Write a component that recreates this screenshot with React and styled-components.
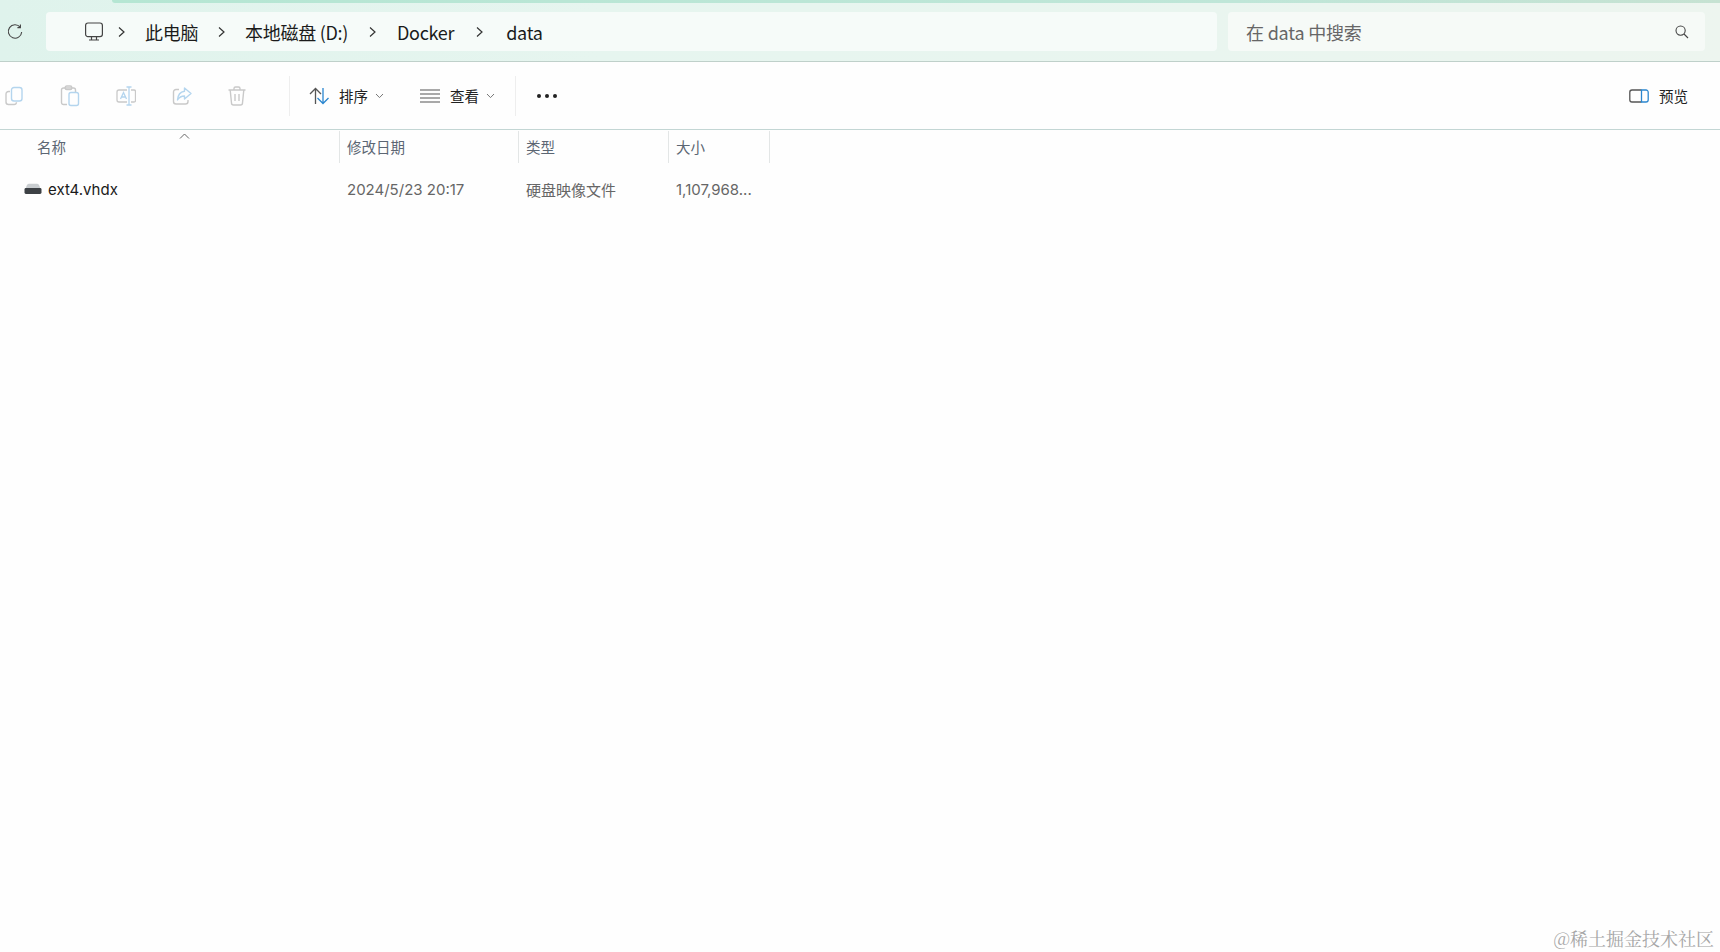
import React from "react";
import styled, { createGlobalStyle } from "styled-components";

const GlobalStyle = createGlobalStyle`
  html, body { margin: 0; padding: 0; background: #fff; }
  body { font-family: "Noto Sans CJK SC", "Inter", "Open Sans", sans-serif; }
`;

const Page = styled.div`
  position: relative;
  width: 1720px;
  height: 952px;
  overflow: hidden;
  background: #fefefe;
`;

const NavBar = styled.div`
  position: relative;
  height: 62px;
  box-sizing: border-box;
  padding: 12px 15px 10px 0;
  display: flex;
  align-items: stretch;
  background: linear-gradient(90deg, #dff3ec 0%, #e6f5ef 35%, #e9f5ef 70%, #edf5ef 100%);
  border-bottom: 1px solid #bfd0ca;
`;

const Accent = styled.div`
  position: absolute;
  top: 0;
  left: 112px;
  right: 0;
  height: 3px;
  border-radius: 0 0 0 3px;
  background: linear-gradient(90deg, #b5e6d3, #bfe6d8 70%, #c6e2d2);
`;

const RefreshSlot = styled.div`
  width: 46px;
  padding-right: 16px;
  box-sizing: border-box;
  display: flex;
  align-items: center;
  justify-content: center;
  padding-top: 1px;
`;

const Crumbs = styled.div`
  width: 1171px;
  display: flex;
  align-items: center;
  background: #f6fbf9;
  border-radius: 4px;
`;

const PcSlot = styled.div`
  width: 66px;
  display: flex;
  justify-content: flex-end;
  padding-right: 4px;
  box-sizing: border-box;
  margin-left: -4px;
`;

const Crumb = styled.span`
  font-size: 18px;
  line-height: 24px;
  color: #1b1b1b;
  letter-spacing: -0.3px;
  white-space: nowrap;
`;

const Chevron = styled.svg`
  width: ${(p) => p.$w}px;
  height: 12px;
  flex: none;
`;

const SearchBox = styled.div`
  width: 477px;
  margin-left: 11px;
  box-sizing: border-box;
  padding: 0 16px 0 18px;
  display: flex;
  align-items: center;
  justify-content: space-between;
  background: #f6faf7;
  border-radius: 4px;
`;

const SearchText = styled.span`
  font-size: 18px;
  line-height: 24px;
  color: #666;
  letter-spacing: -0.2px;
`;

const Toolbar = styled.div`
  height: 68px;
  box-sizing: border-box;
  display: flex;
  align-items: center;
  border-bottom: 1px solid #c3d6d4;
  padding-top: 1px;
`;

const GhostIcons = styled.div`
  display: flex;
  align-items: center;
  gap: 36px;
  padding-left: 4px;
  width: 289px;
  box-sizing: border-box;
`;

const Divider = styled.div`
  width: 1px;
  height: 40px;
  background: #eeeeee;
`;

const ToolLabel = styled.span`
  font-size: 14.5px;
  line-height: 20px;
  color: #222;
  margin-left: ${(p) => p.$ml || 0}px;
`;

const ToolGroup = styled.div`
  display: flex;
  align-items: center;
  margin-left: ${(p) => p.$ml || 0}px;
`;

const Small = styled.svg`
  width: 9px;
  height: 6px;
  margin-left: ${(p) => p.$ml || 7}px;
`;

const Dots = styled.div`
  display: flex;
  gap: 4px;
  margin-left: 21px;
`;

const Dot = styled.i`
  width: 4px;
  height: 4px;
  border-radius: 50%;
  background: #222;
`;

const PushRight = styled.div`
  margin-left: auto;
  margin-right: 32px;
  display: flex;
  align-items: center;
`;

const HeaderRow = styled.div`
  position: relative;
  display: grid;
  grid-template-columns: 340px 179px 150px 101px;
  height: 32px;
  margin-top: 1px;
`;

const HeadCell = styled.div`
  box-sizing: border-box;
  border-right: 1px solid #e3e6e6;
  font-size: 14.5px;
  line-height: 32px;
  color: #5c6673;
  padding-left: ${(p) => p.$pl}px;
  white-space: nowrap;
`;

const SortArrow = styled.svg`
  position: absolute;
  left: 179px;
  top: 2px;
  width: 11px;
  height: 6px;
`;

const FileRow = styled.div`
  display: grid;
  grid-template-columns: 340px 179px 150px 101px;
  height: 26px;
  margin-top: 13px;
  align-items: center;
`;

const NameCell = styled.div`
  display: flex;
  align-items: center;
  padding-left: 24px;
  font-family: "Inter", "Open Sans", sans-serif;
  font-size: 15px;
  color: #1a1a1a;
  gap: 6px;
`;

const DataCell = styled.div`
  font-family: "Inter", "Noto Sans CJK SC", sans-serif;
  font-size: 15px;
  color: #666;
  padding-left: 7px;
  white-space: nowrap;
`;

const Watermark = styled.div`
  position: absolute;
  right: 6px;
  bottom: 2px;
  font-family: "Noto Serif CJK SC", "Liberation Serif", "Noto Sans CJK SC", serif;
  font-size: 18px;
  line-height: 24px;
  color: #a6a6a6;
  white-space: nowrap;
`;

const ArrowRight = ({ w, ...rest }) => (
  <Chevron $w={w} viewBox={`0 0 ${w} 12`} {...rest}>
    <path
      d={`M${w / 2 - 3} 1.5 L${w / 2 + 2} 6 L${w / 2 - 3} 10.5`}
      fill="none"
      stroke="#333"
      strokeWidth="1.2"
    />
  </Chevron>
);

const Down = ({ ml }) => (
  <Small $ml={ml} viewBox="0 0 9 6">
    <path d="M1 1 L4.5 4.6 L8 1" fill="none" stroke="#777" strokeWidth="1" />
  </Small>
);

const grey = "#c9c9c9";
const blue = "#b4d5ee";

function CopyIcon() {
  return (
    <svg width="20" height="20" viewBox="0 0 20 20" fill="none" strokeWidth="1.4">
      <path d="M6 5.5H4.5A2.5 2.5 0 0 0 2 8v8a2.5 2.5 0 0 0 2.5 2.5H10a2.5 2.5 0 0 0 2.5-2.3" stroke={grey} />
      <rect x="7.5" y="1.5" width="10.5" height="13.5" rx="2.5" stroke={blue} />
    </svg>
  );
}

function PasteIcon() {
  return (
    <svg width="20" height="22" viewBox="0 0 20 22" fill="none" strokeWidth="1.4">
      <path d="M7 19.5H3.5A2 2 0 0 1 1.5 17.5V5a2 2 0 0 1 2-2h10a2 2 0 0 1 2 2v2" stroke={grey} />
      <rect x="5.2" y="1" width="6.6" height="3.6" rx="1.5" stroke={grey} />
      <rect x="9" y="7.5" width="9.5" height="13" rx="2" stroke={blue} />
    </svg>
  );
}

function RenameIcon() {
  return (
    <svg width="20" height="20" viewBox="0 0 20 20" fill="none" strokeWidth="1.3">
      <path d="M11 4H3a2 2 0 0 0-2 2v8a2 2 0 0 0 2 2h8" stroke={grey} />
      <path d="M15 4h3a1.5 1.5 0 0 1 1.5 1.5v9A1.5 1.5 0 0 1 18 16h-3" stroke={grey} />
      <path d="M10.5 1h5M13 1v18M10.5 19h5" stroke={blue} />
      <path d="M4.5 13 L7.5 6.5 L10.5 13 M5.6 11h3.8" stroke={blue} />
    </svg>
  );
}

function ShareIcon() {
  return (
    <svg width="20" height="20" viewBox="0 0 20 20" fill="none" strokeWidth="1.4">
      <path d="M7 3.5H4A2.5 2.5 0 0 0 1.5 6v9.5A2.5 2.5 0 0 0 4 18h9.5a2.5 2.5 0 0 0 2.5-2.5V14" stroke={grey} />
      <path d="M12.5 2 L19 7.5 L12.5 13 V10 C9 10 7 11.5 5.5 14 C5.8 9.5 8 5.8 12.5 5.2 Z" stroke={blue} strokeLinejoin="round" />
    </svg>
  );
}

function TrashIcon() {
  return (
    <svg width="18" height="20" viewBox="0 0 18 20" fill="none" stroke={grey} strokeWidth="1.4">
      <path d="M0.5 4h17M6 4V2.5A1.5 1.5 0 0 1 7.5 1h3A1.5 1.5 0 0 1 12 2.5V4" />
      <path d="M2.2 4 L3.5 17a2 2 0 0 0 2 2h7a2 2 0 0 0 2-2L15.8 4" />
      <path d="M7 8v7M11 8v7" />
    </svg>
  );
}

export default function App() {
  return (
    <Page>
      <GlobalStyle />
      <NavBar>
        <Accent />
        <RefreshSlot>
          <svg width="16" height="16" viewBox="0 0 16 16" fill="none" stroke="#444" strokeWidth="1.1">
            <path d="M13.2 3.2 A6.7 6.7 0 1 0 14.7 8" />
            <path d="M13.4 0.6 V3.6 H10.4" />
          </svg>
        </RefreshSlot>
        <Crumbs>
          <PcSlot>
            <svg width="20" height="20" viewBox="0 0 20 20" fill="none" stroke="#444" strokeWidth="1.2">
              <rect x="1.6" y="1" width="16.8" height="13.6" rx="2.4" />
              <path d="M7.5 14.6v3M12.5 14.6v3M5 18h10" />
            </svg>
          </PcSlot>
          <ArrowRight w={24} style={{ marginLeft: 2 }} />
          <Crumb style={{ marginLeft: 11 }}>此电脑</Crumb>
          <ArrowRight w={24} style={{ marginLeft: 12 }} />
          <Crumb style={{ marginLeft: 11 }}>本地磁盘 (D:)</Crumb>
          <ArrowRight w={24} style={{ marginLeft: 13 }} />
          <Crumb style={{ marginLeft: 12 }}>Docker</Crumb>
          <ArrowRight w={24} style={{ marginLeft: 14 }} />
          <Crumb style={{ marginLeft: 14 }}>data</Crumb>
        </Crumbs>
        <SearchBox>
          <SearchText>在 data 中搜索</SearchText>
          <svg width="14" height="14" viewBox="0 0 14 14" fill="none" stroke="#444" strokeWidth="1.1">
            <circle cx="5.6" cy="5.6" r="4.6" />
            <path d="M9 9 L13 13" />
          </svg>
        </SearchBox>
      </NavBar>

      <Toolbar>
        <GhostIcons>
          <CopyIcon />
          <PasteIcon />
          <RenameIcon />
          <ShareIcon />
          <TrashIcon />
        </GhostIcons>
        <Divider />
        <ToolGroup $ml={19}>
          <svg width="21" height="18" viewBox="0 0 21 18" fill="none" strokeWidth="1.3">
            <path d="M6.5 17V1.5M1 7 L6.5 1.5 L12 7" stroke="#555" />
            <path d="M14 1v15.5M8.5 11 L14 16.5 L19.5 11" stroke="#2a86cf" />
          </svg>
          <ToolLabel $ml={9}>排序</ToolLabel>
          <Down ml={7} />
        </ToolGroup>
        <ToolGroup $ml={36}>
          <svg width="20" height="14" viewBox="0 0 20 14" fill="none" stroke="#555" strokeWidth="1.2">
            <path d="M0 1h20M0 5h20M0 9h20M0 13h20" />
          </svg>
          <ToolLabel $ml={10}>查看</ToolLabel>
          <Down ml={7} />
        </ToolGroup>
        <Divider style={{ marginLeft: 20 }} />
        <Dots>
          <Dot />
          <Dot />
          <Dot />
        </Dots>
        <PushRight>
          <svg width="20" height="14" viewBox="0 0 20 14" fill="none" strokeWidth="1.3">
            <path d="M12.5 1H3A2.2 2.2 0 0 0 .8 3.2v7.6A2.2 2.2 0 0 0 3 13h9.5" stroke="#555" />
            <path d="M12.5 1H17a2.2 2.2 0 0 1 2.2 2.2v7.6A2.2 2.2 0 0 1 17 13h-4.5V1Z" stroke="#2a86cf" />
          </svg>
          <ToolLabel $ml={10}>预览</ToolLabel>
        </PushRight>
      </Toolbar>

      <HeaderRow>
        <SortArrow viewBox="0 0 11 6">
          <path d="M1 5.5 L5.5 1 L10 5.5" fill="none" stroke="#666" strokeWidth="1" />
        </SortArrow>
        <HeadCell $pl={37}>名称</HeadCell>
        <HeadCell $pl={7}>修改日期</HeadCell>
        <HeadCell $pl={7}>类型</HeadCell>
        <HeadCell $pl={7}>大小</HeadCell>
      </HeaderRow>

      <FileRow>
        <NameCell>
          <svg width="18" height="12" viewBox="0 0 18 12">
            <path d="M2 5 Q2.5 1 5 .8 H13 Q15.5 1 16 5 Z" fill="#c9cdd0" />
            <rect x="0.5" y="5" width="17" height="6" rx="1.4" fill="#3d4145" />
          </svg>
          <span>ext4.vhdx</span>
        </NameCell>
        <DataCell>2024/5/23 20:17</DataCell>
        <DataCell>硬盘映像文件</DataCell>
        <DataCell>1,107,968...</DataCell>
      </FileRow>

      <Watermark>@稀土掘金技术社区</Watermark>
    </Page>
  );
}
